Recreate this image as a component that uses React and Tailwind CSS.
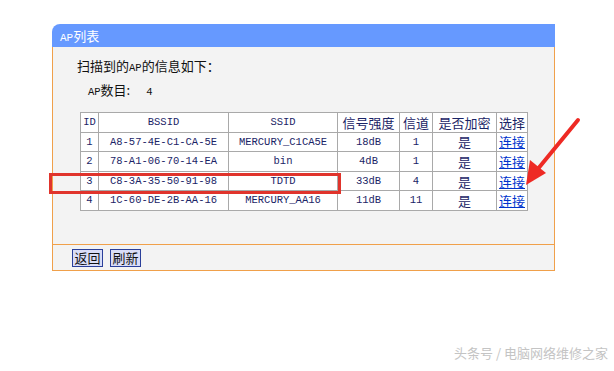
const rows = [
  { id: "1", bssid: "A8-57-4E-C1-CA-5E", ssid: "MERCURY_C1CA5E", signal: "18dB", ch: "1" },
  { id: "2", bssid: "78-A1-06-70-14-EA", ssid: "bin", signal: "4dB", ch: "1" },
  { id: "3", bssid: "C8-3A-35-50-91-98", ssid: "TDTD", signal: "33dB", ch: "4" },
  { id: "4", bssid: "1C-60-DE-2B-AA-16", ssid: "MERCURY_AA16", signal: "11dB", ch: "11" },
];

const cjk = "font-['SimSun','Noto_Sans_CJK_SC',sans-serif]";
const mono = "font-['Liberation_Mono','Noto_Sans_CJK_SC',monospace] text-[10.5px]";

function Cell({ w, children, className = "" }) {
  return (
    <td
      className={`border border-[#a9a9a9] bg-white h-[19.6px] p-0 text-center text-[#1a2466] leading-none ${className}`}
      style={w ? { width: w } : undefined}
    >
      {children}
    </td>
  );
}

export default function App() {
  return (
    <div className={`relative w-[614px] h-[371px] bg-white overflow-hidden ${cjk}`}>
      <div className="ml-[52px] pt-[24px] w-[503px]">
        <div className="h-[23px] bg-[#6699ff] rounded-tl-[8px] pl-[8px] leading-[23px] text-white text-[13px]">
          <span className="font-['Liberation_Mono','Noto_Sans_CJK_SC',monospace] text-[11px]">AP</span>列表
        </div>
        <div className="border-x border-[#f0a04a] bg-[#f3f3f3] h-[197px]">
          <div className="pl-[24px] pt-[8px] leading-[22px] text-[13px] text-[#111]">
            扫描到的<span className={mono}>AP</span>的信息如下：
          </div>
          <div className="pl-[35px] leading-[22px] text-[13px] text-[#111]">
            <span className={mono}>AP</span>数目:
            <span className={`${mono} ml-[16px]`}>4</span>
          </div>
          <table className="ml-[27px] mt-[9px] w-[448px] border-collapse border border-[#a9a9a9]">
            <thead>
              <tr>
                <Cell w={18} className={mono}>ID</Cell>
                <Cell w={130} className={mono}>BSSID</Cell>
                <Cell w={109} className={mono}>SSID</Cell>
                <Cell w={62} className="text-[13px]">信号强度</Cell>
                <Cell w={33} className="text-[13px]">信道</Cell>
                <Cell w={64} className="text-[13px]">是否加密</Cell>
                <Cell className="text-[13px]">选择</Cell>
              </tr>
            </thead>
            <tbody>
              {rows.map((r) => (
                <tr key={r.id}>
                  <Cell className={mono}>{r.id}</Cell>
                  <Cell className={mono}>{r.bssid}</Cell>
                  <Cell className={mono}>{r.ssid}</Cell>
                  <Cell className={mono}>{r.signal}</Cell>
                  <Cell className={mono}>{r.ch}</Cell>
                  <Cell className="text-[13px]">是</Cell>
                  <Cell className="text-[13px]">
                    <span className="text-[#0033cc] underline">连接</span>
                  </Cell>
                </tr>
              ))}
            </tbody>
          </table>
        </div>
        <div className="border border-[#f0a04a] bg-[#f3f3f3] h-[27px] flex items-center gap-[7px] pl-[19px]">
          <button className="h-[18px] w-[31px] border border-[#2a3f9a] bg-[#d9ddf7] text-[13px] leading-none text-[#111]">
            返回
          </button>
          <button className="h-[18px] w-[31px] border border-[#2a3f9a] bg-[#d9ddf7] text-[13px] leading-none text-[#111]">
            刷新
          </button>
        </div>
      </div>

      <div className="absolute left-[49px] top-[173px] w-[292px] h-[21px] border-[3px] border-[#e0342c]" />

      <svg className="absolute left-0 top-0" width="614" height="371" viewBox="0 0 614 371">
        <line x1="578" y1="120" x2="537" y2="170" stroke="#ee2a24" strokeWidth="4" strokeLinecap="round" />
        <polygon points="526,185 530,160 546,173" fill="#ee2a24" />
      </svg>

      <div className="absolute right-[6px] top-[343px] text-[13px] text-[#c4c4c4] font-['Noto_Sans_CJK_SC',sans-serif] [text-shadow:0_0_1px_#fff]">
        头条号 / 电脑网络维修之家
      </div>
    </div>
  );
}
